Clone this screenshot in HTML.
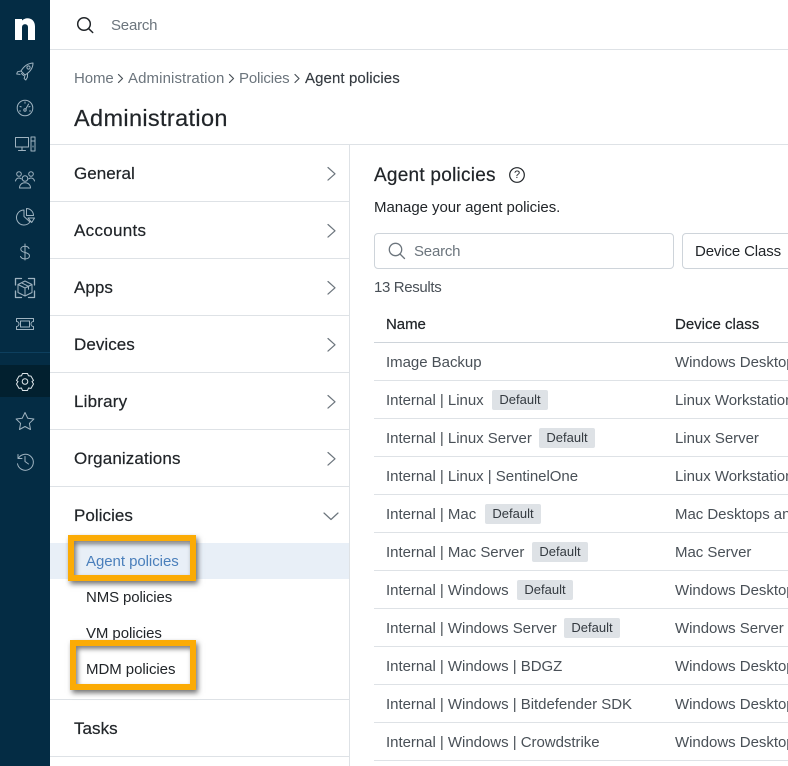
<!DOCTYPE html>
<html lang="en"><head><meta charset="utf-8"><title>Agent policies</title>
<style>
html,body{margin:0;padding:0;background:#fff}
body{width:788px;height:766px;overflow:hidden;position:relative;font-family:"Liberation Sans",sans-serif;color:#212529}
.t,.n,.s,.c,.b{position:absolute;white-space:nowrap;line-height:20px}
.t,.n,.s,.c{margin-top:1px}
.ln{position:absolute;background:#dee2e6;height:1px}
#side{position:absolute;left:0;top:0;width:50px;height:766px;background:#042c44}
.n{left:74px;font-size:17px;letter-spacing:.05px;-webkit-text-stroke:.2px #212529}
.s{left:86px;font-size:15px;letter-spacing:-.05px}
.c{font-size:15px;letter-spacing:-.03px;color:#495057}
.b{height:20px;width:56px;background:#dee2e6;border-radius:2px;font-size:13px;text-align:center;letter-spacing:0;color:#343a40}
.box{position:absolute;border:6.500px solid #fbab05;box-sizing:border-box;box-shadow:2px 3px 5px rgba(0,0,0,.55),inset 2px 3px 5px rgba(0,0,0,.5)}
svg{position:absolute;left:0;top:0;overflow:visible}
</style></head><body>
<div id="side"></div>
<div style="position:absolute;left:0;top:352px;width:50px;height:1px;background:#0d3f5e"></div>
<div style="position:absolute;left:0;top:365px;width:50px;height:32px;background:#02202f"></div>
<svg width="50" height="766" fill="none" stroke="#9fb3c0" stroke-width="1" stroke-linecap="round" stroke-linejoin="round">
<path d="M15 19h7v1.500c1.700-1.400 3.500-2.200 5.300-2.200 4.800 0 7.700 3.300 7.700 8.200V40h-7V27.500c0-2-1-3.200-3-3.200s-3 1.200-3 3.200V40h-7z" fill="#fff" stroke="none"/>
<path d="M33 63c-5 .3-9 3-12 8l4 4c5-3 8-7 8-12zM21 71l-3.500.8-.8 2.200 3.300.4M25 75l-.8 3.600 1.600 1.400 1.600-2.700.2-3.800M21.500 73.500l2 2"/><circle cx="28.500" cy="67.500" r="1.600"/>
<circle cx="25" cy="108" r="7.800"/><circle cx="25" cy="110" r="1.200"/><path d="M25.800 109l2.800-5M25 102v1.300M20 106.500l1.200.4M30 106.500l-1.200.4M19.500 111h1M29.500 111h1"/>
<path d="M15.500 137.500h13v9.500h-13zM22 147v3M18.500 150.500h7M31 137h4v14h-4zM31.500 141h3M33 146v1"/>
<circle cx="19" cy="174" r="2.300"/><circle cx="31" cy="174" r="2.300"/><circle cx="25" cy="178.500" r="2.800"/><path d="M15.500 181c.5-2 2-3 3.500-3 1 0 1.700.3 2.300.9M34.500 181c-.5-2-2-3-3.500-3-1 0-1.700.3-2.300.9M19.500 188c0-3.500 2.500-5.200 5.500-5.200s5.500 1.700 5.500 5.200z"/>
<path d="M24 210a7.500 7.500 0 1 0 6 12l-6-5.500zM26.500 208.500v7h7c0-3.800-3.200-7-7-7zM28 218h6.500l-2.800 4.500z"/>
<path d="M25 244v16M29 248.500c-.7-1.500-2-2.200-4-2.200-2.600 0-4.200 1.300-4.200 3s1.300 2.500 4.200 3.200 4.500 1.600 4.500 3.400-1.800 3-4.500 3c-2.200 0-3.700-.9-4.500-2.400"/>
<path d="M15.500 285v-6.500h6M28.500 278.500h6v6.500M15.500 291v6.500h6M28.500 297.500h6V291" stroke-width="1.300"/><path d="M25 281l7 3.500v8L25 296l-7-3.500v-8zM18 284.500l7 3.500 7-3.500M25 288v8M21.500 282.800l7 3.500v3"/>
<path d="M16.500 318.500h17v3a2.500 2.500 0 0 0 0 5v3h-17v-3a2.500 2.500 0 0 0 0-5z"/><path d="M20.500 321h9v6h-9z"/>
<path d="M22.500 373.500h5l1 2.300 2.500.3 2.500 4.400-1.500 1 1.500 2.500-2.500 4.400-2.500-.4-1 2.500h-5l-1-2.500-2.500.4-2.500-4.400 1.500-2.500-1.500-1 2.500-4.400 2.500-.3z" stroke="#dfe6ea"/><circle cx="25" cy="381.500" r="2.800" stroke="#dfe6ea"/>
<path d="M25 412.500l2.700 5.700 6.200.8-4.500 4.300 1.100 6.200-5.500-3-5.500 3 1.100-6.200-4.500-4.300 6.200-.8z"/>
<path d="M18 454.500v4h4M18.300 458.500a8 8 0 1 1-.8 5.300M25 456.500v5l3.500 2.500"/>
</svg>
<svg width="788" height="766" fill="none" stroke-linecap="round" stroke-linejoin="round">
<circle cx="84" cy="24" r="6.300" stroke="#212529" stroke-width="1.500"/><path d="M88.700 28.700l4 3.800" stroke="#212529" stroke-width="1.500"/>
<g stroke="#6c757d" stroke-width="1.200"><path d="M328 167.500l7 6.300-7 6.300M328 224.500l7 6.300-7 6.300M328 281.500l7 6.300-7 6.300M328 338.500l7 6.300-7 6.300M328 395.500l7 6.300-7 6.300M328 452.500l7 6.300-7 6.300M324 513l7 6.500 7-6.500"/>
<path d="M118.500 74.500l4 4-4 4M229.500 74.500l4 4-4 4M295 74.500l4 4-4 4" stroke="#495057"/></g>
<circle cx="517" cy="175" r="7.300" stroke="#212529" stroke-width="1.200"/>
<circle cx="395.500" cy="249.500" r="6.200" stroke="#6c757d" stroke-width="1.300"/><path d="M400 254l4.500 4.500" stroke="#6c757d" stroke-width="1.300"/>
</svg>
<div class="ln" style="left:50px;top:49px;width:738px"></div>
<div class="ln" style="left:50px;top:144px;width:738px"></div>
<div style="position:absolute;left:349px;top:144px;width:1px;height:622px;background:#dee2e6"></div>

<div class="t" style="left:111px;top:15px;font-size:15px;letter-spacing:-.2px;color:#6c757d">Search</div>
<div class="t" style="left:74px;top:68px;font-size:15px;letter-spacing:-.1px;color:#6c757d">Home</div>
<div class="t" style="left:128px;top:68px;font-size:15px;letter-spacing:.1px;color:#6c757d">Administration</div>
<div class="t" style="left:239px;top:68px;font-size:15px;letter-spacing:-.15px;color:#6c757d">Policies</div>
<div class="t" style="left:305px;top:68px;font-size:15px;letter-spacing:.1px;color:#343a40;-webkit-text-stroke:.15px #343a40">Agent policies</div>
<div class="t" style="left:74px;top:107px;margin-top:0;font-size:23.500px;letter-spacing:.35px;line-height:22px;-webkit-text-stroke:.2px #212529">Administration</div>

<div class="n" style="top:163px">General</div><div class="ln" style="left:50px;top:201px;width:299px"></div>
<div class="n" style="top:220px;letter-spacing:.3px">Accounts</div><div class="ln" style="left:50px;top:258px;width:299px"></div>
<div class="n" style="top:277px">Apps</div><div class="ln" style="left:50px;top:315px;width:299px"></div>
<div class="n" style="top:334px">Devices</div><div class="ln" style="left:50px;top:372px;width:299px"></div>
<div class="n" style="top:391px;letter-spacing:.2px">Library</div><div class="ln" style="left:50px;top:429px;width:299px"></div>
<div class="n" style="top:448px;letter-spacing:.13px">Organizations</div><div class="ln" style="left:50px;top:486px;width:299px"></div>
<div class="n" style="top:505px">Policies</div>
<div style="position:absolute;left:50px;top:543px;width:299px;height:36px;background:#e8eff7"></div>
<div class="s" style="top:551px;color:#4a7fbb">Agent policies</div>
<div class="s" style="top:587px;letter-spacing:-.12px">NMS policies</div>
<div class="s" style="top:623px;letter-spacing:-.08px">VM policies</div>
<div class="s" style="top:659px;letter-spacing:-.05px">MDM policies</div>
<div class="ln" style="left:50px;top:699px;width:299px"></div>
<div class="n" style="top:718px">Tasks</div><div class="ln" style="left:50px;top:756px;width:299px"></div>
<div class="box" style="left:68px;top:535px;width:128px;height:46px"></div>
<div class="box" style="left:70px;top:640px;width:126px;height:50px"></div>

<div class="t" style="left:374px;top:165px;font-size:19px;letter-spacing:.25px;-webkit-text-stroke:.2px #212529">Agent policies</div>
<div class="t" style="left:508px;top:165px;margin-top:0;width:18px;text-align:center;font-size:11px;color:#212529">?</div>
<div class="t" style="left:374px;top:197px;font-size:15px;letter-spacing:-.05px">Manage your agent policies.</div>
<div style="position:absolute;left:374px;top:233px;width:300px;height:36px;box-sizing:border-box;border:1px solid #ced4da;border-radius:4px"></div>
<div class="t" style="left:414px;top:241px;font-size:15px;letter-spacing:-.2px;color:#6c757d">Search</div>
<div style="position:absolute;left:682px;top:233px;width:130px;height:36px;box-sizing:border-box;border:1px solid #ced4da;border-radius:4px"></div>
<div class="t" style="left:695px;top:241px;font-size:15px;letter-spacing:-.13px">Device Class</div>
<div class="t" style="left:374px;top:277px;font-size:15px;letter-spacing:-.35px;color:#495057">13 Results</div>

<div class="t" style="left:386px;top:314px;font-size:15px;letter-spacing:-.05px;-webkit-text-stroke:.2px #212529">Name</div>
<div class="t" style="left:675px;top:314px;font-size:15px;letter-spacing:0;-webkit-text-stroke:.2px #212529">Device class</div>
<div class="ln" style="left:374px;top:342px;width:414px;background:#ced4da"></div>

<div class="c" style="left:386px;top:352px">Image Backup</div><div class="c" style="left:675px;top:352px">Windows Desktops</div><div class="ln" style="left:374px;top:380px;width:414px"></div>
<div class="c" style="left:386px;top:390px">Internal | Linux</div><div class="b" style="left:492px;top:390px">Default</div><div class="c" style="left:675px;top:390px">Linux Workstations</div><div class="ln" style="left:374px;top:418px;width:414px"></div>
<div class="c" style="left:386px;top:428px">Internal | Linux Server</div><div class="b" style="left:539px;top:428px">Default</div><div class="c" style="left:675px;top:428px">Linux Server</div><div class="ln" style="left:374px;top:456px;width:414px"></div>
<div class="c" style="left:386px;top:466px">Internal | Linux | SentinelOne</div><div class="c" style="left:675px;top:466px">Linux Workstations</div><div class="ln" style="left:374px;top:494px;width:414px"></div>
<div class="c" style="left:386px;top:504px">Internal | Mac</div><div class="b" style="left:485px;top:504px">Default</div><div class="c" style="left:675px;top:504px">Mac Desktops and</div><div class="ln" style="left:374px;top:532px;width:414px"></div>
<div class="c" style="left:386px;top:542px">Internal | Mac Server</div><div class="b" style="left:532px;top:542px">Default</div><div class="c" style="left:675px;top:542px">Mac Server</div><div class="ln" style="left:374px;top:570px;width:414px"></div>
<div class="c" style="left:386px;top:580px">Internal | Windows</div><div class="b" style="left:517px;top:580px">Default</div><div class="c" style="left:675px;top:580px">Windows Desktops</div><div class="ln" style="left:374px;top:608px;width:414px"></div>
<div class="c" style="left:386px;top:618px">Internal | Windows Server</div><div class="b" style="left:564px;top:618px">Default</div><div class="c" style="left:675px;top:618px">Windows Server</div><div class="ln" style="left:374px;top:646px;width:414px"></div>
<div class="c" style="left:386px;top:656px">Internal | Windows | BDGZ</div><div class="c" style="left:675px;top:656px">Windows Desktops</div><div class="ln" style="left:374px;top:684px;width:414px"></div>
<div class="c" style="left:386px;top:694px">Internal | Windows | Bitdefender SDK</div><div class="c" style="left:675px;top:694px">Windows Desktops</div><div class="ln" style="left:374px;top:722px;width:414px"></div>
<div class="c" style="left:386px;top:732px">Internal | Windows | Crowdstrike</div><div class="c" style="left:675px;top:732px">Windows Desktops</div><div class="ln" style="left:374px;top:760px;width:414px"></div>
</body></html>
